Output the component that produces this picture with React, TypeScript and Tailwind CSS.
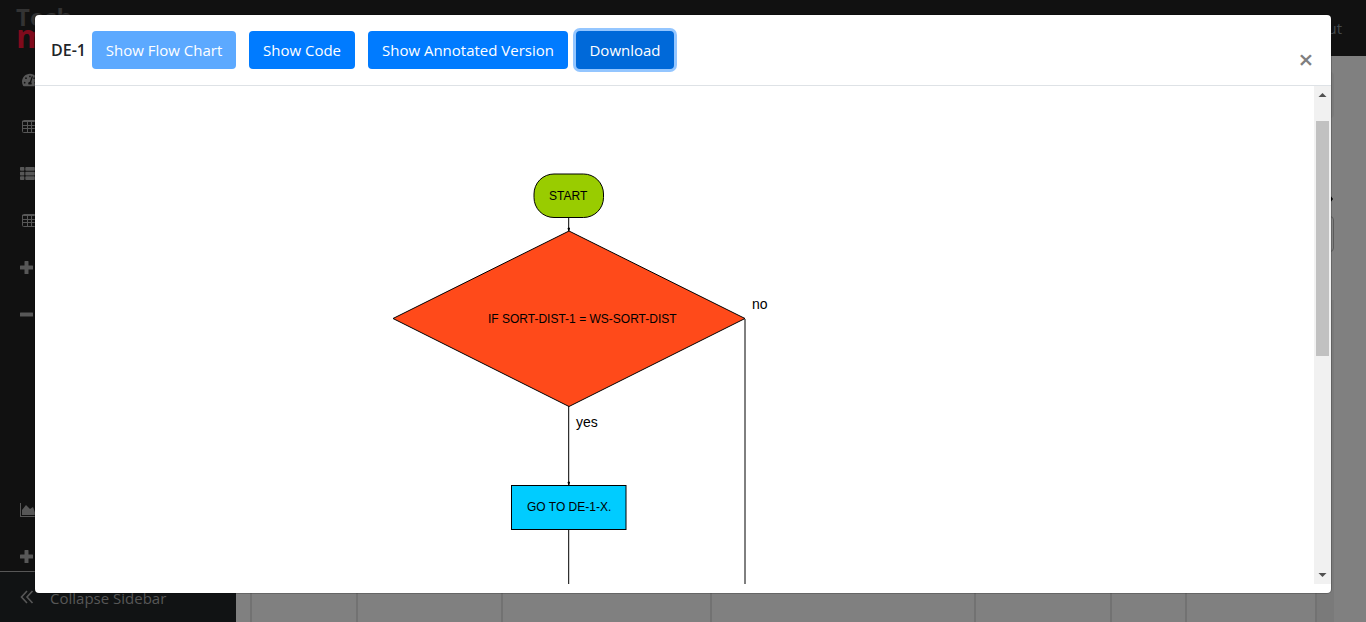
import type { ReactNode } from 'react';
import { FaTachometerAlt, FaThList } from 'react-icons/fa';

function TableIcon() {
  return (
    <svg width="15" height="13" viewBox="0 0 15 13" fill="none" stroke="currentColor">
      <rect x="0.5" y="0.5" width="14" height="12" rx="1" />
      <path d="M0 1.5h15M0 5.5h15M0 8.5h15M5.5 2v11M9.5 2v11" />
    </svg>
  );
}

function PlusIcon() {
  return (
    <svg width="13" height="13" viewBox="0 0 13 13" fill="currentColor">
      <path d="M4.5 0.5Q4.5 0 5 0h3q.5 0 .5.5v4h4q.5 0 .5.5v3q0 .5-.5.5h-4v4q0 .5-.5.5h-3q-.5 0-.5-.5v-4h-4Q0 8.500 0 8V5q0-.5.5-.5h4z" />
    </svg>
  );
}

function MinusIcon() {
  return (
    <svg width="13" height="13" viewBox="0 0 13 13" fill="currentColor">
      <rect y="4.5" width="13" height="4" rx="0.5" />
    </svg>
  );
}

function AreaIcon() {
  return (
    <svg width="18" height="14" viewBox="0 0 18 14" fill="currentColor">
      <path d="M0 0h1v13h17v1H0zM2 12V7l4-5 4 4 3-2 3 8z" />
    </svg>
  );
}

function DoubleLeftIcon() {
  return (
    <svg width="14" height="14" viewBox="0 0 14 14" fill="none" stroke="currentColor" strokeWidth="1.6">
      <path d="M7 1L1.500 7L7 13M12.500 1L7 7l5.500 6" />
    </svg>
  );
}

function NavRow({ label, inset, children }: { label: string; inset?: boolean; children: ReactNode }) {
  return (
    <a
      href="#"
      aria-label={label}
      className={`flex h-[47px] shrink-0 items-center text-[#575757] ${inset ? 'pl-[22px]' : 'pl-5'}`}
    >
      {children}
    </a>
  );
}

function Sidebar() {
  return (
    <aside className="flex w-[236px] shrink-0 flex-col bg-[#111111]">
      <nav className="flex min-h-0 flex-1 flex-col overflow-hidden">
        <NavRow label="Dashboard" inset>
          <FaTachometerAlt size={16} />
        </NavRow>
        <NavRow label="Table" inset>
          <TableIcon />
        </NavRow>
        <NavRow label="List">
          <FaThList size={15} />
        </NavRow>
        <NavRow label="Grid" inset>
          <TableIcon />
        </NavRow>
        <NavRow label="Expand">
          <PlusIcon />
        </NavRow>
        <NavRow label="Collapse">
          <MinusIcon />
        </NavRow>
        <div className="h-[148px] shrink-0" />
        <NavRow label="Charts">
          <AreaIcon />
        </NavRow>
        <NavRow label="More">
          <PlusIcon />
        </NavRow>
      </nav>
      <a
        href="#"
        className="flex h-[51px] items-center gap-4 border-t border-[#575757] bg-[#111314] pl-5 text-[15px] text-[#575757]"
      >
        <DoubleLeftIcon />
        <span className="pt-[3px]">Collapse Sidebar</span>
      </a>
    </aside>
  );
}

function Background() {
  return (
    <div className="flex h-full flex-col bg-[#808080]">
      <header className="flex h-14 shrink-0 items-start justify-between bg-[#111111] pr-6 pl-4">
        <div className="pt-[6px] font-bold">
          <div className="text-2xl leading-[22px] text-[#333333]">Tech</div>
          <div className="text-[32px] leading-4 text-[#800a1c]">m</div>
        </div>
        <a href="#" className="pt-[17px] text-[15px] text-[#44494d]">
          Logout
        </a>
      </header>
      <div className="flex min-h-0 flex-1">
        <Sidebar />
        <main className="flex min-w-0 flex-1 flex-col pr-8 pl-[14px]">
          <div className="mt-4 h-[46px] shrink-0 rounded bg-[#7a7a7a]" />
          <div className="mt-[77px] flex justify-end">
            <svg width="4" height="8" viewBox="0 0 4 8" className="fill-black">
              <path d="M0 0l3 4-3 4z" />
            </svg>
          </div>
          <div className="mt-[13px] h-9 shrink-0 rounded border border-[#5c5c5c]" />
          <div className="mt-12 flex min-h-0 flex-1 bg-[#7a7a7a]">
            <div className="grid flex-1 grid-cols-[106fr_145fr_209fr_264fr_136fr_75fr_128fr] divide-x-2 divide-[#727272] border-x-2 border-[#727272] bg-[#808080]">
              <div />
              <div />
              <div />
              <div />
              <div />
              <div />
              <div />
            </div>
            <div className="w-[17px]" />
          </div>
        </main>
      </div>
    </div>
  );
}

function FlowChart() {
  return (
    <svg
      width="1279"
      height="498"
      viewBox="35 86 1279 498"
      className="shrink-0 font-['Liberation_Sans',Arial,sans-serif]"
      stroke="#000"
      fill="none"
    >
      <path d="M568.7 218v12M568.7 406v78M568.7 529v55M745 319v265" />
      <path d="M568 228h1.500l-.7 3zM568 482h1.500l-.7 3z" fill="#000" />
      <rect x="534" y="174" width="69.5" height="43.5" rx="20" fill="#99cc00" />
      <path d="M393 318.5L569 231L745 318.5L569 406.5Z" fill="#ff4a1a" />
      <rect x="511.5" y="485.5" width="114.5" height="44" fill="#00ccff" />
      <g stroke="none" fill="#000">
        <g fontSize="12">
          <text x="549" y="200">START</text>
          <text x="488" y="323">IF SORT-DIST-1 = WS-SORT-DIST</text>
          <text x="527" y="511">GO TO DE-1-X.</text>
        </g>
        <g fontSize="14">
          <text x="752" y="309">no</text>
          <text x="576" y="427">yes</text>
        </g>
      </g>
    </svg>
  );
}

function ScrollTrack() {
  return (
    <div className="flex w-[17px] shrink-0 flex-col items-center bg-[#f1f1f1]">
      <svg width="17" height="17" viewBox="0 0 17 17" className="fill-[#505050]">
        <path d="M4.5 11h8L8.5 7z" />
      </svg>
      <div className="mt-[18px] h-[235px] w-[13px] bg-[#c1c1c1]" />
      <svg width="17" height="17" viewBox="0 0 17 17" className="mt-auto fill-[#505050]">
        <path d="M4.5 6h8l-4 4z" />
      </svg>
    </div>
  );
}

const button = 'h-[38px] rounded text-[15px] whitespace-nowrap text-white';

export default function App() {
  return (
    <div className="relative h-screen overflow-hidden font-['Open_Sans','Noto_Sans',sans-serif]">
      <Background />
      <div className="absolute inset-0 flex px-[35px] pt-[15px] pb-[29px]">
        <div
          role="dialog"
          aria-labelledby="dialog-title"
          className="flex min-w-0 flex-1 flex-col overflow-hidden rounded-[4px] bg-white ring-1 ring-black/20"
        >
          <div className="flex h-[71px] shrink-0 items-center border-b border-[#dee2e6] px-4">
            <h5 id="dialog-title" className="w-[41px] text-base font-semibold whitespace-nowrap text-[#212529]">
              DE-1
            </h5>
            <button disabled className={`${button} w-36 bg-[#5ca9ff]`}>
              Show Flow Chart
            </button>
            <button className={`${button} ml-[13px] w-[106px] bg-[#007bff]`}>Show Code</button>
            <button className={`${button} ml-[13px] w-[200px] bg-[#007bff]`}>Show Annotated Version</button>
            <button className={`${button} ml-2 w-[98px] bg-[#0069d9] ring-3 ring-[#94c6ff]`}>Download</button>
            <button
              aria-label="Close"
              className="mt-[18px] ml-auto w-[18px] text-[26px] leading-6 font-semibold text-[#7f7f7f]"
            >
              ×
            </button>
          </div>
          <div className="flex min-h-0 flex-1 pb-[9px]">
            <div className="min-w-0 flex-1 overflow-hidden">
              <FlowChart />
            </div>
            <ScrollTrack />
          </div>
        </div>
      </div>
    </div>
  );
}
